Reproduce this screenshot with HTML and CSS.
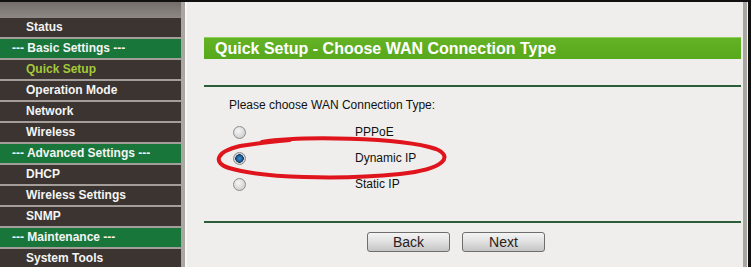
FILE: index.html
```html
<!DOCTYPE html>
<html lang="en">
<head>
    <meta charset="UTF-8">
    <title>Quick Setup - Choose WAN Connection Type</title>
    <link rel="stylesheet" href="styles.css">
</head>
<body>
    <div class="frame">
        <nav class="sidebar">
            <div class="side-top"></div>
            <a href="#" class="item">Status</a>
            <div class="item group">--- Basic Settings ---</div>
            <a href="#" class="item active">Quick Setup</a>
            <a href="#" class="item">Operation Mode</a>
            <a href="#" class="item">Network</a>
            <a href="#" class="item">Wireless</a>
            <div class="item group">--- Advanced Settings ---</div>
            <a href="#" class="item">DHCP</a>
            <a href="#" class="item">Wireless Settings</a>
            <a href="#" class="item">SNMP</a>
            <div class="item group">--- Maintenance ---</div>
            <a href="#" class="item">System Tools</a>
        </nav>
        <div class="divider"></div>
        <main class="content">
            <div class="title">Quick Setup - Choose WAN Connection Type</div>
            <div class="rule"></div>
            <p class="prompt">Please choose WAN Connection Type:</p>
            <div class="choices">
                <label class="choice">
                    <input type="radio" name="wan" value="pppoe">
                    <span>PPPoE</span>
                </label>
                <label class="choice">
                    <input type="radio" name="wan" value="dynamic" checked>
                    <span>Dynamic IP</span>
                </label>
                <label class="choice">
                    <input type="radio" name="wan" value="static">
                    <span>Static IP</span>
                </label>
            </div>
            <div class="rule rule-bottom"></div>
            <div class="buttons">
                <button class="btn">Back</button>
                <button class="btn">Next</button>
            </div>
        </main>
        <div class="edge"></div>
        <!-- hand drawn marker round the selected option -->
        <svg class="mark" width="751" height="267" viewBox="0 0 751 267">
            <path d="M262 142 C300 136 400 137 436 149 C453 156 446 169 400 174 C340 180 262 178 229 168 C213 163 215 152 240 146 C252 144 270 142 290 140"
                  fill="none" stroke="#e0141c" stroke-width="4" stroke-linecap="round"/>
        </svg>
    </div>
</body>
</html>
```

FILE: styles.css
```css
body {
    margin: 0;
    padding: 0;
    font-family: "Liberation Sans", Arial, sans-serif;
    background: #efeeec;
}
.frame {
    position: relative;
    display: flex;
    height: 267px;
    border-top: 2px solid #111;
    border-right: 3px solid #111;
    box-sizing: border-box;
    overflow: hidden;
}
.sidebar {
    width: 181px;
    flex: none;
    display: flex;
    flex-direction: column;
    background: #a39e9a;
}
.side-top {
    flex: none;
    height: 16px;
    background: linear-gradient(#746f6c, #8d8884);
}
.item {
    display: block;
    flex: none;
    height: 19px;
    line-height: 19px;
    margin-bottom: 2px;
    padding-left: 26px;
    background-color: #3b3431;
    color: #f4f4f4;
    font-size: 12px;
    font-weight: bold;
    text-decoration: none;
    white-space: nowrap;
}
.group {
    padding-left: 12px;
    background-color: #18763a;
}
.active {
    color: #a6c93a;
}
.divider {
    width: 4px;
    flex: none;
    background: #aaa6a2;
    border-right: 2px solid #f8f8f6;
}
.content {
    flex: 1;
    padding: 0 2px 0 17px;
}
.edge {
    width: 4px;
    flex: none;
    background: #a9a5a1;
    border-right: 1px solid #f4f4f2;
}
.title {
    margin-top: 35px;
    height: 22px;
    line-height: 22px;
    padding-left: 11px;
    background: linear-gradient(#64b225, #58a81c);
    border-top: 1px solid #8fd05a;
    box-sizing: border-box;
    color: #fff;
    font-size: 16px;
    font-weight: bold;
}
.rule {
    margin-top: 26px;
    height: 2px;
    background: #2c5d3a;
}
.rule-bottom {
    margin-top: 24px;
}
.prompt {
    margin: 11px 0 0 25px;
    line-height: 14px;
    font-size: 12px;
    color: #111;
}
.choices {
    margin-top: 7px;
    display: flex;
    flex-direction: column;
}
.choice {
    display: flex;
    align-items: center;
    height: 26px;
    font-size: 12px;
    color: #111;
}
.choice input {
    appearance: none;
    width: 13px;
    height: 13px;
    margin: 0 0 0 29px;
    border: 1px solid #8c8c8c;
    border-radius: 50%;
    background: radial-gradient(circle at 40% 35%, #f6f6f6, #c4c4c4);
    box-sizing: border-box;
}
.choice input:checked {
    background: radial-gradient(circle, #3d8fd0 0, #1b5a94 3px, #0d2f55 4px, #d8d8d8 4.5px, #bcbcbc);
}
.choice span {
    margin-left: 109px;
}
.buttons {
    margin-top: 9px;
    padding-left: 163px;
    display: flex;
    gap: 12px;
}
.btn {
    width: 83px;
    height: 20px;
    padding: 0;
    border: 1px solid #6e6e6e;
    border-radius: 3px;
    background: linear-gradient(#f4f4f4, #e2e2e2 45%, #c4c4c4);
    font-family: "Liberation Sans", Arial, sans-serif;
    font-size: 14px;
    color: #2a1c1c;
}
.mark {
    position: absolute;
    left: 0;
    top: -2px;
    pointer-events: none;
}
```
